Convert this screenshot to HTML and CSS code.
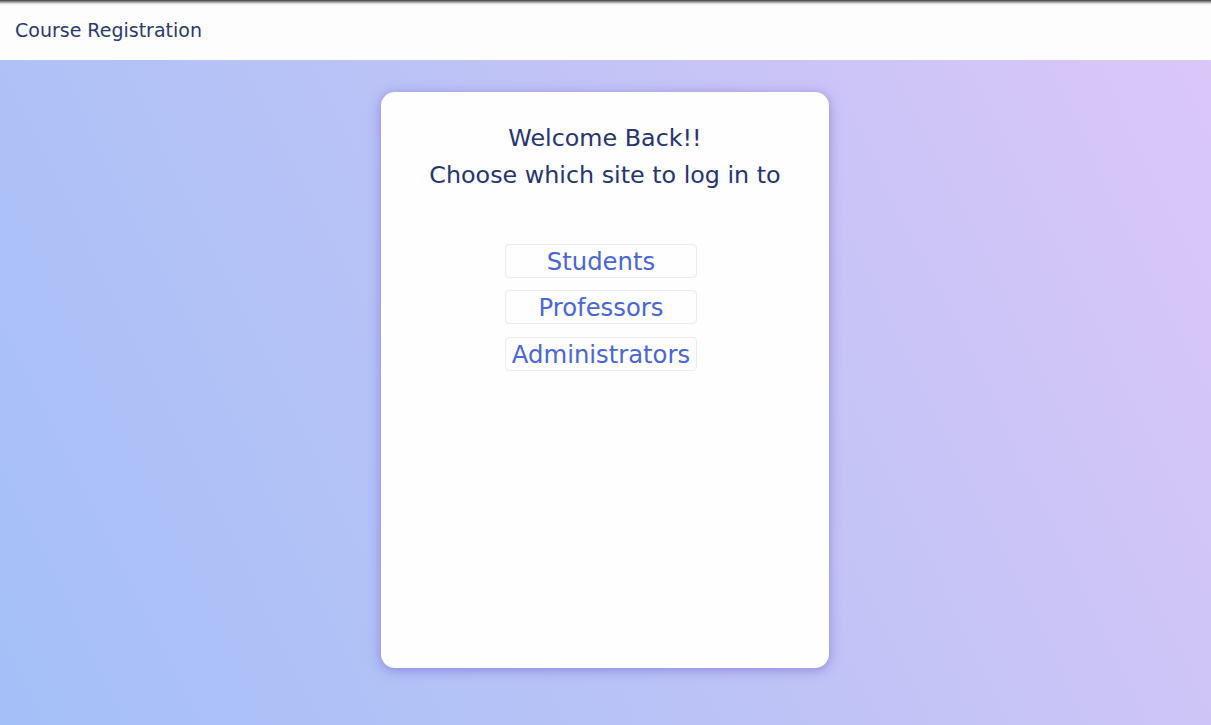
FILE: index.html
```html
<!DOCTYPE html>
<html lang="en">
<head>
<meta charset="utf-8">
<title>Course Registration</title>
<link rel="stylesheet" href="styles.css">
</head>
<body>
<header class="navbar">
  <span class="brand">Course Registration</span>
</header>
<main class="page">
  <section class="card">
    <h1 class="title">Welcome Back!!<br>Choose which site to log in to</h1>
    <nav class="choices">
      <a class="choice" href="#">Students</a>
      <a class="choice" href="#">Professors</a>
      <a class="choice" href="#">Administrators</a>
    </nav>
  </section>
</main>
</body>
</html>
```
FILE: styles.css
```css
* { box-sizing: border-box; }
html, body { margin: 0; padding: 0; }
body {
  height: 725px;
  overflow: hidden;
  font-family: "DejaVu Sans", "Open Sans", sans-serif;
  background: #fdfdfd;
  display: flex;
  flex-direction: column;
}
.navbar {
  height: 60px;
  flex: none;
  display: flex;
  align-items: center;
  padding: 0 15px;
  background: linear-gradient(to bottom, #3c3c3c 0, #9a9a9a 2px, #f2f2f2 4px, #fdfdfd 6px);
}
.brand {
  font-size: 19px;
  color: #2b3a6b;
}
.page {
  flex: 1;
  display: flex;
  justify-content: center;
  align-items: flex-start;
  padding-top: 32px;
  background: linear-gradient(64deg, #a4c0f8 0%, #bdc3f6 50%, #dbc6f8 100%);
}
.card {
  width: 448px;
  height: 576px;
  margin-right: 1px;
  background: #fefefe;
  border-radius: 14px;
  box-shadow: 0 2px 12px rgba(95, 75, 200, 0.5);
  display: flex;
  flex-direction: column;
  align-items: center;
  padding-top: 28px;
}
.title {
  margin: 0;
  font-weight: 400;
  font-size: 23.8px;
  line-height: 37px;
  color: #263571;
  text-align: center;
}
.choices {
  margin-top: 50px;
  display: flex;
  flex-direction: column;
  gap: 12px;
  margin-right: 8px;
}
.choice {
  width: 192px;
  height: 34px;
  border: 1px solid #ebebf0;
  border-radius: 4px;
  display: flex;
  align-items: center;
  justify-content: center;
  font-size: 24.3px;
  color: #4a66d8;
  text-decoration: none;
  white-space: nowrap;
}
.choice:last-child { margin-top: 1px; }
```
